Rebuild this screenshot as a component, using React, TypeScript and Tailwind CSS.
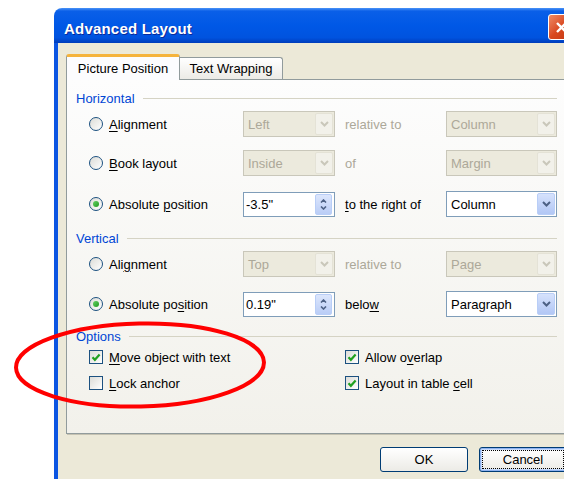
import React from "react";

type ComboProps = { value: string; width: string; disabled?: boolean };

function Chevron({ color }: { color: string }) {
  return (
    <svg width="9" height="6" viewBox="0 0 9 6">
      <path d="M1 1l3.5 3.5L8 1" fill="none" stroke={color} strokeWidth="2" />
    </svg>
  );
}

function Combo({ value, width, disabled }: ComboProps) {
  return (
    <div
      className={`flex h-[26px] items-stretch border ${width} ${
        disabled
          ? "border-[#C9C7BA] bg-[#ECEADD] text-[#ACA899]"
          : "border-[#7F9DB9] bg-white text-black"
      }`}
    >
      <span className="flex flex-1 items-center pl-[4px]">{value}</span>
      {disabled ? (
        <span className="m-[1px] flex w-[18px] items-center justify-center rounded-[2px] border border-[#E4E2D6] bg-[#F2F1EA]">
          <Chevron color="#C9C7BA" />
        </span>
      ) : (
        <span className="m-[1px] flex w-[18px] items-center justify-center rounded-[2px] border border-[#B9CEF7] bg-linear-to-b from-[#D6E2FC] to-[#B2C7F5]">
          <Chevron color="#4D6185" />
        </span>
      )}
    </div>
  );
}

function SpinBox({ value }: { value: string }) {
  return (
    <div className="flex h-[25px] w-[92px] items-stretch border border-[#7F9DB9] bg-white">
      <span className="flex flex-1 items-center pl-[2px]">{value}</span>
      <span className="my-[1px] mr-[2px] flex w-[17px] flex-col items-center justify-center gap-[3px] rounded-[2px] border border-[#B9CEF7] bg-linear-to-b from-[#DCE6FC] to-[#BACDF6]">
        <svg width="7" height="4" viewBox="0 0 7 4">
          <path d="M1 3.5l2.5-2.5L6 3.5" fill="none" stroke="#4D6185" strokeWidth="1.6" />
        </svg>
        <svg width="7" height="4" viewBox="0 0 7 4">
          <path d="M1 0.5l2.5 2.5L6 0.5" fill="none" stroke="#4D6185" strokeWidth="1.6" />
        </svg>
      </span>
    </div>
  );
}

function Radio({ checked }: { checked?: boolean }) {
  return (
    <span className="flex h-[14px] w-[14px] shrink-0 items-center justify-center rounded-full border border-[#1C5180] bg-linear-to-br from-[#DCDCD7] to-white">
      {checked && (
        <span className="h-[6px] w-[6px] rounded-full bg-linear-to-br from-[#62D162] to-[#1E9A1E]" />
      )}
    </span>
  );
}

function Checkbox({ checked }: { checked?: boolean }) {
  return (
    <span className="flex h-[14px] w-[14px] shrink-0 items-center justify-center border border-[#1C5180] bg-linear-to-br from-[#DCDCD7] to-white">
      {checked && (
        <svg width="10" height="9" viewBox="0 0 10 9">
          <path d="M1.5 4.2l2.4 2.6L8.6 1.6" fill="none" stroke="#21A121" strokeWidth="2.2" />
        </svg>
      )}
    </span>
  );
}

function GroupHeading({ title }: { title: string }) {
  return (
    <div className="flex h-[16px] items-center">
      <span className="text-[#0046D5]">{title}</span>
      <span className="ml-[8px] h-px flex-1 bg-[#D5D3C4]" />
    </div>
  );
}

const u = "underline decoration-1 underline-offset-[2px]";

export default function App() {
  return (
    <div className="relative h-[479px] w-[564px] overflow-hidden bg-white font-['Liberation_Sans',Arial,sans-serif] text-[13px] leading-none text-black">
      <div className="ml-[54px] mt-[8px] flex w-[529px] flex-col">
        {/* title bar */}
        <div className="flex h-[35px] items-start justify-between rounded-t-[8px] bg-[linear-gradient(180deg,#4A93F7_0%,#0A5FE8_9%,#0058E6_50%,#0053DF_85%,#003CBA_100%)] pl-[10px] pr-[9px]">
          <span className="mt-[13px] text-[15px] font-bold tracking-[0.2px] text-white [text-shadow:1px_1px_0_#0A2A9A]">
            Advanced Layout
          </span>
          <span className="mt-[6px] flex h-[26px] w-[26px] items-center justify-center rounded-[3px] border border-white bg-linear-to-br from-[#EE8A64] via-[#D9481F] to-[#C23712]">
            <svg width="13" height="13" viewBox="0 0 13 13">
              <path d="M2 2l9 9M11 2l-9 9" stroke="white" strokeWidth="2.4" />
            </svg>
          </span>
        </div>

        <div className="flex h-[440px] flex-col border-x-4 border-[#0B55E2] bg-[#ECE9D8] pl-[8px] pr-[3px] pt-[11px]">
          {/* tabs */}
          <div className="flex h-[25px] items-end">
            <div className="relative z-10 -mb-px flex h-[26px] w-[114px] items-center justify-center rounded-t-[3px] border-x border-t-[3px] border-x-[#919B9C] border-t-[#F5B33C] bg-[#FCFCFE]">
              Picture Position
            </div>
            <div className="flex h-[22px] w-[103px] items-center justify-center rounded-tr-[3px] border-r border-t border-[#919B9C] bg-linear-to-b from-white to-[#ECEBE6]">
              Text Wrapping
            </div>
          </div>

          {/* tab page */}
          <div className="h-[355px] w-[510px] border border-[#919B9C] bg-linear-to-b from-[#FDFDFD] to-[#F2F1EB] pl-[9px] pt-[10px] shadow-[1px_1px_0_#C5C2B2]">
            <div className="w-[481px]">
              <GroupHeading title="Horizontal" />

              <div className="mt-[5px] flex h-[26px] items-center">
                <label className="flex w-[167px] items-center gap-[6px] pl-[13px]">
                  <Radio />
                  <span>
                    <span className={u}>A</span>lignment
                  </span>
                </label>
                <Combo value="Left" width="w-[92px]" disabled />
                <span className="w-[111px] pl-[10px] text-[#ACA899]">relative to</span>
                <Combo value="Column" width="w-[111px]" disabled />
              </div>

              <div className="mt-[13px] flex h-[26px] items-center">
                <label className="flex w-[167px] items-center gap-[6px] pl-[13px]">
                  <Radio />
                  <span>
                    <span className={u}>B</span>ook layout
                  </span>
                </label>
                <Combo value="Inside" width="w-[92px]" disabled />
                <span className="w-[111px] pl-[10px] text-[#ACA899]">of</span>
                <Combo value="Margin" width="w-[111px]" disabled />
              </div>

              <div className="mt-[15px] flex h-[26px] items-center">
                <label className="flex w-[167px] items-center gap-[6px] pl-[13px]">
                  <Radio checked />
                  <span>
                    Absolute <span className={u}>p</span>osition
                  </span>
                </label>
                <SpinBox value={'-3.5"'} />
                <span className="w-[111px] pl-[10px]">
                  <span className={u}>t</span>o the right of
                </span>
                <Combo value="Column" width="w-[111px]" />
              </div>

              <div className="mt-[13px]">
                <GroupHeading title="Vertical" />
              </div>

              <div className="mt-[5px] flex h-[26px] items-center">
                <label className="flex w-[167px] items-center gap-[6px] pl-[13px]">
                  <Radio />
                  <span>
                    Ali<span className={u}>g</span>nment
                  </span>
                </label>
                <Combo value="Top" width="w-[92px]" disabled />
                <span className="w-[111px] pl-[10px] text-[#ACA899]">relative to</span>
                <Combo value="Page" width="w-[111px]" disabled />
              </div>

              <div className="mt-[14px] flex h-[26px] items-center">
                <label className="flex w-[167px] items-center gap-[6px] pl-[13px]">
                  <Radio checked />
                  <span>
                    Absolute po<span className={u}>s</span>ition
                  </span>
                </label>
                <SpinBox value={'0.19"'} />
                <span className="w-[111px] pl-[10px]">
                  belo<span className={u}>w</span>
                </span>
                <Combo value="Paragraph" width="w-[111px]" />
              </div>

              <div className="mt-[11px]">
                <GroupHeading title="Options" />
              </div>

              <div className="mt-[6px] flex h-[14px] items-center">
                <label className="flex w-[269px] items-center gap-[6px] pl-[13px]">
                  <Checkbox checked />
                  <span>
                    <span className={u}>M</span>ove object with text
                  </span>
                </label>
                <label className="flex items-center gap-[6px]">
                  <Checkbox checked />
                  <span>
                    Allow o<span className={u}>v</span>erlap
                  </span>
                </label>
              </div>

              <div className="mt-[12px] flex h-[14px] items-center">
                <label className="flex w-[269px] items-center gap-[6px] pl-[13px]">
                  <Checkbox />
                  <span>
                    <span className={u}>L</span>ock anchor
                  </span>
                </label>
                <label className="flex items-center gap-[6px]">
                  <Checkbox checked />
                  <span>
                    Layout in table <span className={u}>c</span>ell
                  </span>
                </label>
              </div>
            </div>
          </div>

          {/* dialog buttons */}
          <div className="mt-[13px] flex justify-end gap-[11px] pr-[9px]">
            <button className="flex h-[25px] w-[88px] items-center justify-center rounded-[3px] border border-[#003C74] bg-linear-to-b from-white to-[#ECEBE6]">
              OK
            </button>
            <button className="flex h-[25px] w-[88px] items-center justify-center rounded-[3px] border border-[#003C74] bg-linear-to-b from-white to-[#ECEBE6] p-[2px] shadow-[inset_0_0_0_1px_#8FB3F0,inset_0_0_0_2px_#C6DAFB]">
              <span className="flex h-full w-full items-center justify-center border border-dotted border-black">
                Cancel
              </span>
            </button>
          </div>
        </div>
      </div>

      {/* red marker ring */}
      <svg
        className="pointer-events-none absolute left-[10px] top-[318px]"
        width="262"
        height="96"
        viewBox="0 0 262 96"
      >
        <ellipse
          cx="130"
          cy="47"
          rx="124"
          ry="41.5"
          transform="rotate(-1.3 130 47)"
          fill="none"
          stroke="#FF0000"
          strokeWidth="4"
        />
      </svg>
    </div>
  );
}
